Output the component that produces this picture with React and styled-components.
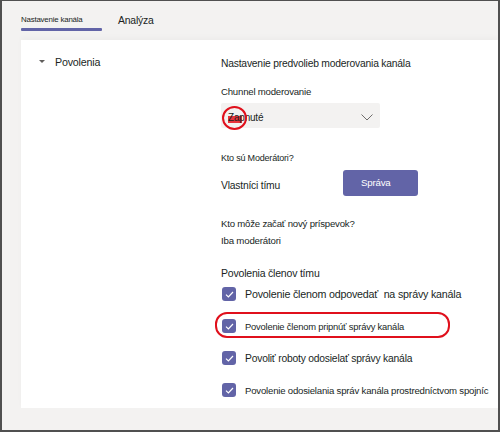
import React from 'react';
import styled, { createGlobalStyle } from 'styled-components';

const GlobalStyle = createGlobalStyle`
	html, body {
		margin: 0;
		padding: 0;
		background: #ffffff;
	}
	body {
		font-family: 'Liberation Sans', Arial, sans-serif;
		color: #201f1e;
		letter-spacing: -0.2px;
	}
`;

const Frame = styled.div`
	width: 500px;
	height: 432px;
	box-sizing: border-box;
	background: #f3f2f1;
	border: 2px solid #505050;
	border-top-width: 1px;
	display: flex;
	flex-direction: column;
	overflow: hidden;
`;

const TabBar = styled.div`
	height: 39px;
	display: flex;
	align-items: flex-start;
	padding-left: 19px;
	gap: 16px;
`;

const Tab = styled.div`
	display: flex;
	flex-direction: column;
	width: ${(p) => (p.$active ? '81px' : 'auto')};
	padding-top: ${(p) => (p.$active ? '13px' : '14px')};
	font-size: ${(p) => p.$size};
	line-height: 12px;
	&::after {
		content: '';
		display: ${(p) => (p.$active ? 'block' : 'none')};
		height: 3px;
		margin-top: 2px;
		background: #6264a7;
		border-radius: 1px;
	}
`;

const Card = styled.div`
	margin-left: 19px;
	height: 368px;
	background: #ffffff;
	display: flex;
	padding-top: 15px;
	box-sizing: border-box;
	box-shadow: 0 -3px 5px rgba(0, 0, 0, 0.025);
`;

const SideNav = styled.div`
	width: 200px;
	flex-shrink: 0;
`;

const NavItem = styled.div`
	display: flex;
	align-items: center;
	padding-left: 18px;
	gap: 10px;
	font-size: 10.7px;
	line-height: 14px;
`;

const Caret = styled.span`
	width: 0;
	height: 0;
	border-left: 3px solid transparent;
	border-right: 3px solid transparent;
	border-top: 3px solid #605e5c;
	margin-top: -1px;
`;

const Content = styled.div`
	display: flex;
	flex-direction: column;
	padding-top: 2px;
	flex: 1;
`;

const Text = styled.div`
	font-size: ${(p) => p.$size || '9.7px'};
	line-height: 14px;
	margin-top: ${(p) => p.$mt || '0'};
	white-space: nowrap;
`;

const Select = styled.div`
	position: relative;
	margin-top: 4px;
	width: 159px;
	height: 25px;
	box-sizing: border-box;
	background: #f3f2f1;
	border-radius: 2px;
	display: flex;
	align-items: center;
	justify-content: space-between;
	padding: 3px 7px 0 7px;
	font-size: 10px;
	span {
		position: relative;
		z-index: 1;
	}
`;

const Marker = styled.div`
	position: absolute;
	left: 7px;
	top: 13px;
	width: 14px;
	height: 7px;
	background: #e8343c;
`;

const Ring = styled.div`
	position: absolute;
	left: 1px;
	top: 3px;
	width: 25px;
	height: 24px;
	box-sizing: border-box;
	border: 2.5px solid #e0101c;
	border-radius: 50%;
	z-index: 2;
`;

const OwnerRow = styled.div`
	display: flex;
	align-items: flex-start;
	margin-top: 5px;
	height: 26px;
`;

const Owner = styled.div`
	width: 122px;
	font-size: 10.3px;
	line-height: 14px;
	margin-top: 9px;
`;

const Button = styled.button`
	all: unset;
	width: 75px;
	height: 26px;
	box-sizing: border-box;
	padding-left: 18px;
	background: #6264a7;
	color: #ffffff;
	border-radius: 3px;
	font-family: 'Liberation Sans', Arial, sans-serif;
	font-size: 9.7px;
	letter-spacing: -0.2px;
	line-height: 26px;
	cursor: pointer;
`;

const CheckList = styled.div`
	display: flex;
	flex-direction: column;
	gap: 6px;
	margin-top: 1px;
`;

const CheckRow = styled.label`
	position: relative;
	display: flex;
	align-items: center;
	height: 26px;
	gap: 9px;
	padding-left: 1px;
	font-size: ${(p) => p.$size};
	white-space: pre;
	&::after {
		content: '';
		display: ${(p) => (p.$highlight ? 'block' : 'none')};
		position: absolute;
		left: -6px;
		top: -1px;
		width: 235px;
		height: 26px;
		box-sizing: border-box;
		border: 2px solid #e0101c;
		border-radius: 12px;
	}
`;

const Box = styled.span`
	width: 14px;
	height: 14px;
	flex-shrink: 0;
	border-radius: 3px;
	background: #6264a7;
	display: flex;
	align-items: center;
	justify-content: center;
`;

const Check = () => (
	<Box>
		<svg width='9' height='7' viewBox='0 0 9 7' fill='none'>
			<path d='M1 3.6L3.4 6L8 1' stroke='#ffffff' strokeWidth='1.2' />
		</svg>
	</Box>
);

const permissions = [
	{ label: 'Povolenie členom odpovedať  na správy kanála', size: '10.7px' },
	{ label: 'Povolenie členom pripnúť správy kanála', size: '9.4px', highlight: true },
	{ label: 'Povoliť roboty odosielať správy kanála', size: '10.3px' },
	{ label: 'Povolenie odosielania správ kanála prostredníctvom spojníc', size: '9.6px' },
];

const App = () => {
	return (
		<>
			<GlobalStyle />
			<Frame>
				<TabBar>
					<Tab $active $size='7.9px'>
						Nastavenie kanála
					</Tab>
					<Tab $size='10.4px'>Analýza</Tab>
				</TabBar>
				<Card>
					<SideNav>
						<NavItem>
							<Caret />
							Povolenia
						</NavItem>
					</SideNav>
					<Content>
						<Text $size='10.3px'>Nastavenie predvolieb moderovania kanála</Text>
						<Text $size='9.6px' $mt='14px'>
							Chunnel moderovanie
						</Text>
						<Select>
							<Marker />
							<Ring />
							<span>Zapnuté</span>
							<svg width='12' height='7' viewBox='0 0 12 7' fill='none'>
								<path d='M0.5 0.5L6 6L11.5 0.5' stroke='#605e5c' strokeWidth='0.9' />
							</svg>
						</Select>
						<Text $size='9px' $mt='23px'>
							Kto sú Moderátori?
						</Text>
						<OwnerRow>
							<Owner>Vlastníci tímu</Owner>
							<Button>Správa</Button>
						</OwnerRow>
						<Text $size='9.6px' $mt='21px'>
							Kto môže začať nový príspevok?
						</Text>
						<Text $size='9.7px' $mt='3px'>
							Iba moderátori
						</Text>
						<Text $size='10.5px' $mt='18px'>
							Povolenia členov tímu
						</Text>
						<CheckList>
							{permissions.map((item) => (
								<CheckRow key={item.label} $size={item.size} $highlight={item.highlight}>
									<Check />
									<span>{item.label}</span>
								</CheckRow>
							))}
						</CheckList>
					</Content>
				</Card>
			</Frame>
		</>
	);
};

export default App;
